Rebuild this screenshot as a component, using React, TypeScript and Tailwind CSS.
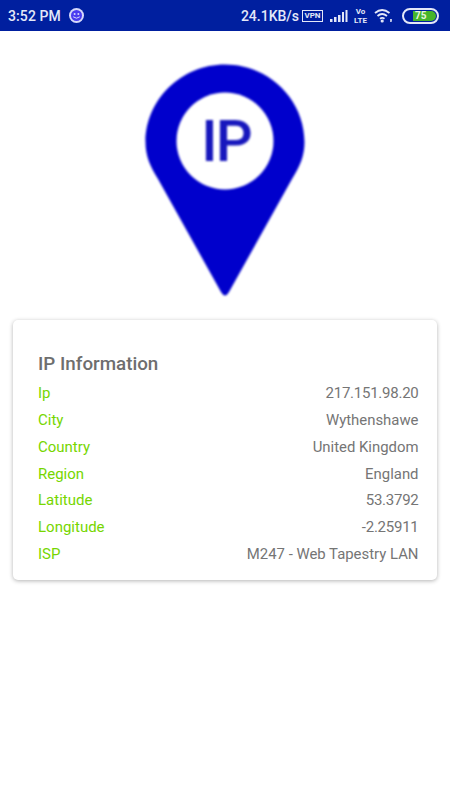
import { Fragment } from "react";

const rows = [
  { label: "Ip", value: "217.151.98.20", numeric: true },
  { label: "City", value: "Wythenshawe" },
  { label: "Country", value: "United Kingdom" },
  { label: "Region", value: "England" },
  { label: "Latitude", value: "53.3792", numeric: true },
  { label: "Longitude", value: "-2.25911", numeric: true },
  { label: "ISP", value: "M247 - Web Tapestry LAN" },
];

const StatusBar = () => (
  <div className="h-[31px] bg-[#001f9f] flex items-center text-[#e4e8f8] font-medium pl-[8px] pr-[11px] shrink-0">
    <span className="text-[14px] leading-none tracking-[0.1px]">3:52 PM</span>
    {/* notification face */}
    <svg width="17" height="17" viewBox="0 0 17 17" className="ml-[7px] blur-[0.4px]">
      <circle cx="8.500" cy="8.500" r="7.500" fill="#d5d8fa" />
      <circle cx="8.500" cy="8.500" r="5.500" fill="#4a3bf0" />
      <circle cx="6.600" cy="7" r="1" fill="#d5d8fa" />
      <circle cx="10.400" cy="7" r="1" fill="#d5d8fa" />
      <path d="M5.200 9.800 Q8.500 12.600 11.800 9.800" stroke="#d5d8fa" strokeWidth="1" fill="none" />
    </svg>

    <span className="ml-auto text-[14px] leading-none">24.1KB/s</span>
    {/* vpn */}
    <span className="ml-[3px] w-[21px] h-[12px] border border-[#e4e8f8] text-[8px] leading-[10px] text-center font-bold">VPN</span>
    {/* signal */}
    <svg width="18" height="14" viewBox="0 0 18 14" className="ml-[7px]" fill="#e4e8f8">
      <rect x="0" y="10" width="2.500" height="3" />
      <rect x="4" y="8" width="2.500" height="5" />
      <rect x="8" y="6" width="2.500" height="7" />
      <rect x="12" y="3" width="2" height="10" />
      <rect x="15.500" y="1" width="2" height="12" />
    </svg>
    {/* volte */}
    <div className="ml-[5px] w-[15px] flex flex-col items-center text-[8px] leading-[9px] font-bold">
      <span>Vo</span>
      <span>LTE</span>
    </div>
    {/* wifi */}
    <svg width="19" height="15" viewBox="0 0 19 15" className="ml-[6px]" fill="none" stroke="#e4e8f8" strokeWidth="1.800">
      <path d="M1 5 Q8 -1 15.500 5" />
      <path d="M3.500 8 Q8 4 13 8" />
      <path d="M6 10.800 Q8.200 9 10.500 10.800" />
      <circle cx="8.200" cy="13" r="0.700" fill="#e4e8f8" />
      <rect x="16.500" y="11.500" width="1" height="2" strokeWidth="0.800" />
    </svg>
    {/* battery */}
    <div className="ml-[9px] w-[37px] h-[16px] rounded-full border-2 border-[#e4e8f8] flex items-center pl-[9px] pr-[1px]">
      <div className="h-[10px] w-full bg-[#46b52a] rounded-r-full text-[10px] leading-[10px] font-bold text-[#e8f5e0] pl-[2px]">75</div>
    </div>
  </div>
);

const Pin = () => (
  <svg width="160" height="234" viewBox="0 0 160 234" className="block blur-[0.8px]">
    <path
      d="M80 0.500 C36 0.500 0.500 36 0.500 78 C0.500 92 5 102 13 115 L76 228 Q80 235 84 228 L147 115 C155 102 159.500 92 159.500 78 C159.500 36 124 0.500 80 0.500 Z"
      fill="#0000cc"
    />
    <circle cx="80" cy="77" r="48.500" fill="#fff" />
    <text
      x="81"
      y="97"
      textAnchor="middle"
      fontSize="58"
      fontWeight="500"
      letterSpacing="-2"
      fill="#1717bd"
      fontFamily="Roboto, sans-serif"
    >
      IP
    </text>
  </svg>
);

export default function App() {
  return (
    <div className="w-[450px] h-[800px] bg-white flex flex-col font-['Roboto',sans-serif]">
      <StatusBar />
      <div className="flex justify-center pt-[33px]">
        <Pin />
      </div>

      {/* Info card */}
      <div className="mx-[13px] mt-[22px] h-[260px] bg-white rounded-[5px] shadow-[0_1px_4px_rgba(0,0,0,0.3)] pl-[25px] pr-[18.500px] pt-[33px]">
        <h2 className="text-[18.800px] leading-[22px] font-medium text-[#6e6e6e] mb-[5px]">IP Information</h2>
        <div className="grid grid-cols-[auto_1fr] auto-rows-[26.830px] items-center text-[15px]">
          {rows.map((row) => (
            <Fragment key={row.label}>
              <span className="text-[#76d600]">{row.label}</span>
              <span className={row.numeric ? "text-right text-[#757575] tracking-[-0.25px]" : "text-right text-[#757575] text-[14.900px]"}>
                {row.value}
              </span>
            </Fragment>
          ))}
        </div>
      </div>
    </div>
  );
}
